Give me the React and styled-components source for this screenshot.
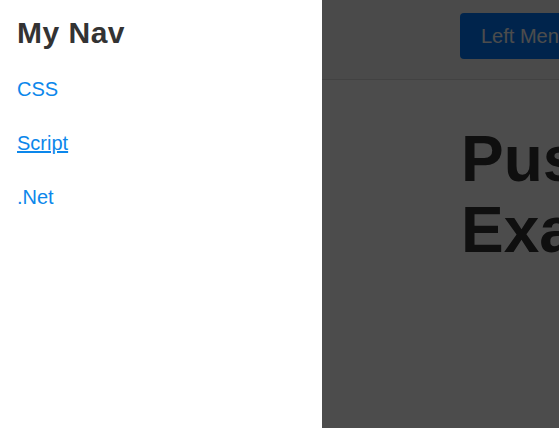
import React from 'react'
import styled, { createGlobalStyle } from 'styled-components'

const GlobalStyle = createGlobalStyle`
  html, body {
    margin: 0;
    padding: 0;
    height: 100%;
    overflow: hidden;
  }
  body {
    font-family: "Liberation Sans", Arial, Helvetica, sans-serif;
    color: #333;
  }
`

const Page = styled.div`
  display: flex;
  width: 559px;
  height: 428px;
  overflow: hidden;
`

const SideNav = styled.nav`
  flex: 0 0 322px;
  height: 100%;
  background: #fff;
  padding: 15px 17px;
  box-sizing: border-box;
  display: flex;
  flex-direction: column;
`

const NavTitle = styled.h2`
  margin: 0 0 26px;
  font-size: 30px;
  line-height: 36px;
  font-weight: 700;
  letter-spacing: 0.5px;
  color: #333;
`

const NavList = styled.div`
  display: flex;
  flex-direction: column;
  gap: 30px;
`

const NavLink = styled.a`
  font-size: 20px;
  line-height: 24px;
  color: #0c87eb;
  text-decoration: ${({ $active }) => ($active ? 'underline' : 'none')};
  cursor: pointer;
`

const Main = styled.main`
  position: relative;
  flex: 0 0 559px;
  height: 100%;
  background: #fff;
`

const Header = styled.header`
  height: 80px;
  box-sizing: border-box;
  background: #f8f8f8;
  border-bottom: 1px solid #ddd;
  padding: 13px 0 0 138px;
`

const MenuButton = styled.button`
  background: #007bff;
  color: #fff;
  border: none;
  border-radius: 4px;
  font-family: inherit;
  font-size: 20px;
  line-height: 26px;
  padding: 10px 21px;
  white-space: nowrap;
  cursor: pointer;
`

const Content = styled.section`
  padding: 44px 0 0 139px;
`

const Heading = styled.h1`
  margin: 0;
  max-width: 380px;
  font-size: 64px;
  line-height: 71px;
  font-weight: 700;
  color: #333;
`

const Overlay = styled.div`
  position: absolute;
  inset: 0;
  background: rgba(0, 0, 0, 0.7);
`

const links = ['CSS', 'Script', '.Net']

const App = () => {
  return (
    <>
      <GlobalStyle />
      <Page>
        <SideNav>
          <NavTitle>My Nav</NavTitle>
          <NavList>
            {links.map((l) => (
              <NavLink key={l} href="#" $active={l === 'Script'}>
                {l}
              </NavLink>
            ))}
          </NavList>
        </SideNav>
        <Main>
          <Header>
            <MenuButton>Left Menu</MenuButton>
          </Header>
          <Content>
            <Heading>Push Example</Heading>
          </Content>
          <Overlay />
        </Main>
      </Page>
    </>
  )
}

export default App
